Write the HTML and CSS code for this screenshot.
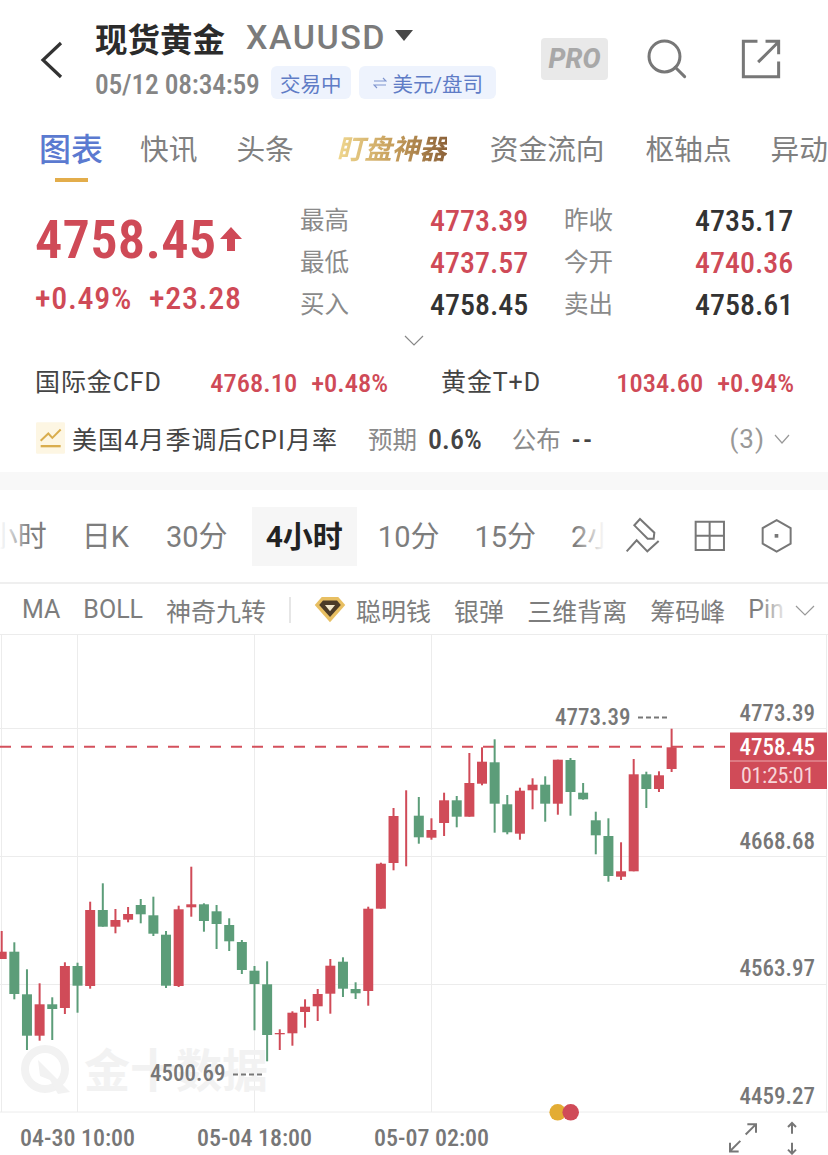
FILE: index.html
```html
<!DOCTYPE html>
<html>
<head>
  <title>现货黄金 XAUUSD</title>
  <link rel="stylesheet" href="styles.css">
</head>
<body>
  <header class="topbar">
    <svg class="back-icon" viewBox="0 0 24 38"><path d="M21 2 L3 19 L21 36"/></svg>
    <div class="title-block">
      <div class="title-row">
        <span class="title-name">现货黄金</span>
        <span class="title-code">XAUUSD</span>
        <span class="title-caret"></span>
      </div>
      <div class="meta-row">
        <span class="meta-time num">05/12 08:34:59</span>
        <span class="pill">交易中</span>
        <span class="pill pill-unit">
          <svg class="swap-icon" viewBox="0 0 14 12"><path d="M1 4 H13 L10 1 M13 8 H1 L4 11"/></svg>
          美元/盘司
        </span>
      </div>
    </div>
    <div class="actions">
      <span class="pro-badge">PRO</span>
      <svg class="search-icon" viewBox="350 35 125 125"><circle cx="405" cy="90" r="46"/><path d="M437 122 L465 150"/></svg>
      <svg class="share-icon" viewBox="630 40 125 125"><path d="M682 50 H640 V155 H745 V110"/><path d="M684 112 L742 54 M706 50 H745 V88"/></svg>
    </div>
  </header>

  <nav class="tabs">
    <span class="tab tab-active">图表</span>
    <span class="tab">快讯</span>
    <span class="tab">头条</span>
    <span class="tab tab-gold">盯盘神器</span>
    <span class="tab tab-funds">资金流向</span>
    <span class="tab">枢轴点</span>
    <span class="tab">异动</span>
  </nav>

  <section class="quote">
    <div class="quote-main">
      <div class="price-row">
        <span class="price num">4758.45</span>
        <svg class="price-arrow" viewBox="0 0 22 24"><path d="M11 0 L22 12 H15 V24 H7 V12 H0 Z"/></svg>
      </div>
      <div class="change-row num">
        <span>+0.49%</span>
        <span>+23.28</span>
      </div>
    </div>
    <div class="quote-grid">
      <span class="q-label">最高</span><span class="q-value num red">4773.39</span>
      <span class="q-label">昨收</span><span class="q-value num">4735.17</span>
      <span class="q-label">最低</span><span class="q-value num red">4737.57</span>
      <span class="q-label">今开</span><span class="q-value num red">4740.36</span>
      <span class="q-label">买入</span><span class="q-value num">4758.45</span>
      <span class="q-label">卖出</span><span class="q-value num">4758.61</span>
    </div>
  </section>

  <div class="expand-row">
    <svg class="expand-chevron" viewBox="0 0 20 11"><path d="M1 1 L10 10 L19 1"/></svg>
  </div>

  <section class="markets">
    <div class="market">
      <span class="market-name">国际金CFD</span>
      <span class="market-value num">4768.10</span>
      <span class="market-change num">+0.48%</span>
    </div>
    <div class="market">
      <span class="market-name">黄金T+D</span>
      <span class="market-value num">1034.60</span>
      <span class="market-change num">+0.94%</span>
    </div>
  </section>

  <section class="event">
    <svg class="event-icon" viewBox="48 20 87 95">
      <rect x="48" y="20" width="87" height="95" rx="4"/>
      <path class="event-line" d="M62 76 L85 54 L97 67 L122 42"/>
      <path class="event-bar" d="M62 92 H122"/>
    </svg>
    <span class="event-title">美国4月季调后CPI月率</span>
    <span class="event-label">预期</span>
    <span class="event-value num">0.6%</span>
    <span class="event-label">公布</span>
    <span class="event-value event-dash num">--</span>
    <span class="event-count">(3)</span>
    <svg class="event-chevron" viewBox="0 0 16 10"><path d="M1 1 L8 9 L15 1"/></svg>
  </section>

  <div class="band"></div>

  <section class="toolbar">
    <div class="periods">
      <span class="period period-first">1小时</span>
      <span class="period">日K</span>
      <span class="period period-thirty">30分</span>
      <span class="period period-active">4小时</span>
      <span class="period">10分</span>
      <span class="period">15分</span>
      <span class="period">2小时</span>
    </div>
    <svg class="tool-icon tool-pin" viewBox="45 35 105 108">
      <path d="M90 41 L133 82 L131 100 L113 100 L73 60 Z"/>
      <path d="M50 138 L80 105 L112 138 L146 107"/>
    </svg>
    <svg class="tool-icon tool-grid" viewBox="250 42 100 100">
      <path d="M258 50 H343 V135 H258 Z M300 50 V135 M258 92 H343"/>
    </svg>
    <svg class="tool-icon tool-hex" viewBox="453 40 100 107">
      <path d="M503 46 L545 70 V117 L503 141 L461 117 V70 Z"/>
      <rect class="tool-dot" x="497" y="88" width="11" height="11"/>
    </svg>
  </section>

  <section class="indicators">
    <span class="indicator">MA</span>
    <span class="indicator">BOLL</span>
    <span class="indicator">神奇九转</span>
    <span class="indicator-sep"></span>
    <svg class="gem-icon" viewBox="100 44 100 85">
      <path class="gem-outer" d="M124 47 H176 L198 72 L150 127 L102 72 Z"/>
      <path class="gem-inner" d="M128 58 H172 L184 72 L150 110 L116 72 Z"/>
      <path class="gem-light" d="M134 72 H166 L150 92 Z"/>
    </svg>
    <span class="indicator indicator-gem">聪明钱</span>
    <span class="indicator">银弹</span>
    <span class="indicator">三维背离</span>
    <span class="indicator">筹码峰</span>
    <span class="indicator">Pin Bar</span>
    <svg class="indicator-chevron" viewBox="0 0 20 11"><path d="M1 1 L10 10 L19 1"/></svg>
  </section>

  <section class="chart">
    <svg class="chart-svg" viewBox="0 634 828 478">
      <path class="grid-line" d="M0 634.5 H828 M1.5 634 V1112 M826.5 634 V1112 M0 728.5 H826 M0 856.5 H826 M0 984.5 H826 M0 1112 H828 M77.5 634 V1112 M254.5 634 V1112 M431.5 634 V1112"/>

      <g class="watermark">
        <circle class="watermark-ring" cx="45" cy="1069" r="20"/>
        <path class="watermark-wedge" d="M38 1060 L70 1092 L58 1094 L50 1080 L40 1076 Z"/>
        <text class="watermark-text" x="84" y="1087">金十数据</text>
      </g>

      <path class="price-line" d="M0 746.7 H730"/>
      <g id="candles"></g>

      <text class="chart-label" x="555" y="725">4773.39</text>
      <path class="mark-dash" d="M638 717.5 H668"/>
      <text class="chart-label" x="150" y="1081">4500.69</text>
      <path class="mark-dash" d="M233 1074.5 H264"/>

      <text class="axis-label" x="815" y="721">4773.39</text>
      <text class="axis-label" x="815" y="849">4668.68</text>
      <text class="axis-label" x="815" y="976">4563.97</text>
      <text class="axis-label" x="815" y="1104">4459.27</text>

      <rect class="price-tag" x="730" y="732.5" width="97" height="56.5"/>
      <path class="price-tag-line" d="M730 761 H827"/>
      <text class="tag-price" x="815" y="755">4758.45</text>
      <text class="tag-time" x="814" y="783">01:25:01</text>

      <circle class="dot-gold" cx="557.7" cy="1112.3" r="8.3"/>
      <circle class="dot-red" cx="570.7" cy="1112.3" r="8.3"/>
    </svg>
  </section>

  <footer class="time-axis">
    <span class="time-label num">04-30 10:00</span>
    <span class="time-label num">05-04 18:00</span>
    <span class="time-label num">05-07 02:00</span>
    <svg class="expand-icon" viewBox="980 512 90 95">
      <path d="M1033 549 L1062 520 M1038 518 H1064 V544 M1017 568 L988 597 M986 574 V600 H1012"/>
    </svg>
    <svg class="scale-icon" viewBox="1160 510 36 102">
      <path d="M1178 548 V516 M1166 528 L1178 516 L1190 528 M1178 575 V608 M1166 596 L1178 608 L1190 596"/>
    </svg>
  </footer>

  <script src="chart.js"></script>
</body>
</html>
```

FILE: styles.css
```css
* {
  box-sizing: border-box;
}

body {
  margin: 0;
  width: 828px;
  height: 1155px;
  overflow: hidden;
  background: #fff;
  color: #333;
  font-family: Roboto, "Noto Sans CJK SC", sans-serif;
}

svg {
  display: block;
  flex: none;
  fill: none;
}

.num {
  font-stretch: 85%;
}

.red {
  color: #cf4a57;
}

/* top bar */
.topbar {
  display: flex;
  height: 120px;
  padding-left: 40px;
}

.back-icon {
  width: 24px;
  height: 38px;
  margin-top: 41px;
  stroke: #333;
  stroke-width: 3.2;
}

.title-block {
  margin-left: 31px;
  padding-top: 15px;
}

.title-row {
  display: flex;
  align-items: center;
  height: 44px;
}

.title-name {
  font-size: 32.5px;
  font-weight: 700;
  color: #2b2b2b;
}

.title-code {
  margin-left: 21px;
  font-size: 34px;
  font-weight: 500;
  letter-spacing: 1.5px;
  color: #7b7b7b;
}

.title-caret {
  margin-left: 9px;
  margin-top: -3px;
  border-left: 9px solid transparent;
  border-right: 9px solid transparent;
  border-top: 11px solid #484848;
}

.meta-row {
  display: flex;
  align-items: center;
  height: 33px;
  margin-top: 7px;
}

.meta-time {
  width: 176px;
  padding-top: 3px;
  font-size: 27.5px;
  font-weight: 500;
  letter-spacing: -0.2px;
  color: #858585;
}

.pill {
  display: flex;
  align-items: center;
  height: 33px;
  padding: 0 9px;
  margin-right: 8px;
  border-radius: 6px;
  background: #eef3fd;
  color: #5f7cc6;
  font-size: 20.5px;
}

.pill-unit {
  padding: 0 13px 0 14px;
}

.swap-icon {
  width: 14px;
  height: 12px;
  margin-right: 6px;
  stroke: #7f95cf;
  stroke-width: 1.2;
}

.actions {
  display: flex;
  margin-left: auto;
  padding-right: 46px;
  padding-top: 38px;
}

.pro-badge {
  width: 67px;
  height: 42px;
  border-radius: 4px;
  background: #e9e9e9;
  color: #a8a8a8;
  font-size: 27px;
  font-weight: 800;
  font-style: italic;
  line-height: 42px;
  text-align: center;
}

.search-icon {
  width: 42px;
  height: 42px;
  margin-left: 38px;
  stroke: #777;
  stroke-width: 9;
  stroke-linecap: round;
}

.share-icon {
  width: 42px;
  height: 42px;
  margin-left: 52px;
  stroke: #777;
  stroke-width: 9;
}

/* tabs */
.tabs {
  display: flex;
  align-items: center;
  gap: 39px;
  height: 66px;
  padding: 0 0 12px 39px;
  overflow: hidden;
  white-space: nowrap;
}

.tab {
  position: relative;
  flex: none;
  font-size: 28.7px;
  color: #808080;
}

.tab-active {
  margin-right: -2px;
  font-size: 32px;
  font-weight: 500;
  color: #5b7ad0;
}

.tab-active::after {
  content: "";
  position: absolute;
  left: 16px;
  bottom: -12px;
  width: 33px;
  height: 4px;
  background: #e3ad4b;
}

.tab-gold {
  margin: 0 4px 0 4px;
  font-size: 27.5px;
  font-weight: 700;
  font-style: italic;
  background: linear-gradient(90deg, #f0d890, #c79f5c 50%, #8c6239);
  -webkit-background-clip: text;
  background-clip: text;
  color: transparent;
}

.tab-funds {
  margin-right: 2px;
}

/* quote block */
.quote {
  display: flex;
  height: 139px;
  padding: 13px 0 0 35px;
}

.quote-main {
  width: 265px;
  padding-top: 10px;
}

.price-row {
  display: flex;
  align-items: center;
  height: 60px;
}

.price {
  font-size: 54.5px;
  font-weight: 600;
  color: #cf4a57;
  letter-spacing: 0.2px;
}

.price-arrow {
  width: 22px;
  height: 24px;
  margin-left: 4px;
  fill: #cf4a57;
}

.change-row {
  display: flex;
  gap: 17px;
  margin-top: 14px;
  font-size: 32px;
  font-weight: 500;
  line-height: 30px;
  letter-spacing: 0.7px;
  color: #cf4a57;
}

.quote-grid {
  display: grid;
  grid-template-columns: 94px 98px 95px 98px;
  grid-auto-rows: 42px;
  column-gap: 36px;
  align-items: center;
}

.q-label {
  padding-bottom: 4px;
  font-size: 24.5px;
  color: #8a8a8a;
}

.q-value {
  font-size: 30px;
  font-weight: 500;
  text-align: right;
}

.expand-row {
  display: flex;
  justify-content: center;
  align-items: center;
  height: 30px;
}

.expand-chevron {
  width: 20px;
  height: 11px;
  stroke: #888;
  stroke-width: 1.2;
}

/* related markets */
.markets {
  display: flex;
  gap: 53px;
  align-items: center;
  height: 54px;
  padding-left: 35px;
}

.market {
  display: flex;
  align-items: center;
  width: 353px;
}

.market-name {
  margin-right: auto;
  padding-bottom: 4px;
  font-size: 25px;
  letter-spacing: 0.9px;
  color: #444;
}

.market-value,
.market-change {
  font-size: 26.5px;
  font-weight: 500;
  color: #cf4a57;
}

.market-change {
  margin-left: 14px;
}

/* calendar event */
.event {
  display: flex;
  align-items: center;
  height: 60px;
  padding-left: 36px;
}

.event-icon {
  width: 29px;
  height: 32px;
  margin-top: -3px;
}

.event-icon rect {
  fill: #fdf6e3;
}

.event-line {
  stroke: #d9ad4e;
  stroke-width: 6;
}

.event-bar {
  stroke: #d9ad4e;
  stroke-width: 7;
}

.event-title {
  margin-left: 7px;
  padding-bottom: 2px;
  font-size: 25px;
  letter-spacing: 1.1px;
  color: #444;
}

.event-label {
  margin-left: 30px;
  padding-bottom: 2px;
  font-size: 24.5px;
  color: #8a8a8a;
}

.event-value {
  margin-left: 11px;
  font-size: 28px;
  font-weight: 500;
  color: #444;
}

.event-dash {
  letter-spacing: 3px;
}

.event-count {
  margin-left: auto;
  font-size: 26px;
  letter-spacing: 1px;
  color: #999;
}

.event-chevron {
  width: 16px;
  height: 10px;
  margin: 0 38px 0 9px;
  stroke: #999;
  stroke-width: 1.2;
}

.band {
  height: 18px;
  margin-top: 3px;
  background: #f8f8f8;
}

/* period toolbar */
.toolbar {
  display: flex;
  align-items: center;
  height: 94px;
  border-bottom: 2px solid #efefef;
}

.periods {
  position: relative;
  display: flex;
  flex: none;
  align-items: center;
  gap: 7px;
  width: 605px;
  height: 59px;
  margin-right: 20px;
  overflow: hidden;
}

.periods::before,
.periods::after {
  content: "";
  position: absolute;
  top: 0;
  width: 30px;
  height: 100%;
  background: linear-gradient(90deg, #fff, rgba(255, 255, 255, 0));
}

.periods::before {
  left: 0;
}

.periods::after {
  right: 0;
  background: linear-gradient(90deg, rgba(255, 255, 255, 0), #fff);
}

.period {
  display: flex;
  flex: none;
  align-items: center;
  height: 59px;
  padding: 0 14px 4px;
  font-size: 29px;
  color: #7d7d7d;
  white-space: nowrap;
}

.period-first {
  margin-left: -41.5px;
}

.period-thirty {
  margin-left: 2px;
}

.period-active {
  margin-left: 3px;
  background: #f6f6f6;
  font-size: 30px;
  font-weight: 700;
  color: #222;
}

.tool-icon {
  stroke: #777;
  stroke-width: 6;
}

.tool-pin {
  width: 35px;
  height: 36px;
  margin-top: -2px;
}

.tool-grid {
  width: 33.3px;
  height: 33.3px;
  margin-left: 33px;
}

.tool-hex {
  width: 33.3px;
  height: 35.7px;
  margin-left: 34px;
}

.tool-dot {
  fill: #777;
  stroke: none;
}

/* indicator row */
.indicators {
  position: relative;
  display: flex;
  align-items: center;
  gap: 23px;
  height: 50px;
  padding: 1px 0 0 22px;
  overflow: hidden;
  white-space: nowrap;
}

.indicators::after {
  content: "";
  position: absolute;
  top: 0;
  right: 0;
  width: 70px;
  height: 100%;
  background: linear-gradient(90deg, rgba(255, 255, 255, 0), #fff 45%);
}

.indicator {
  flex: none;
  font-size: 25px;
  color: #7d7d7d;
}

.indicator-sep {
  flex: none;
  width: 2px;
  height: 26px;
  background: #e6e6e6;
}

.gem-icon {
  width: 32px;
  height: 27px;
}

.gem-outer {
  fill: #e8bf62;
}

.gem-inner {
  fill: #4b3b28;
}

.gem-light {
  fill: #f3e8cd;
}

.indicator-gem {
  margin-left: -13px;
}

.indicator-chevron {
  position: absolute;
  right: 13px;
  top: 21px;
  z-index: 1;
  width: 20px;
  height: 11px;
  stroke: #999;
  stroke-width: 1.2;
}

/* chart */
.chart {
  position: relative;
  height: 478px;
}

.chart-svg {
  width: 828px;
  height: 478px;
  overflow: visible;
}

.grid-line {
  stroke: #ececec;
  stroke-width: 1;
}

.watermark-ring {
  fill: none;
  stroke: #f2f2f2;
  stroke-width: 8;
}

.watermark-wedge {
  fill: #f2f2f2;
}

.watermark-text {
  fill: #f2f2f2;
  font-size: 46px;
  font-weight: 700;
}

.price-line {
  stroke: #d4505c;
  stroke-width: 2;
  stroke-dasharray: 11 10;
}

.candle-red {
  fill: #d04b58;
}

.candle-green {
  fill: #5c9d79;
}

.chart-label,
.axis-label,
.tag-price,
.tag-time {
  font-size: 23px;
  font-stretch: 85%;
  font-weight: 500;
  fill: #777;
}

.axis-label,
.tag-price,
.tag-time {
  text-anchor: end;
}

.mark-dash {
  stroke: #777;
  stroke-width: 2;
  stroke-dasharray: 5 3;
}

.price-tag {
  fill: #d04b58;
}

.price-tag-line {
  stroke: #eba9ae;
  stroke-width: 1;
}

.tag-price {
  fill: #fff;
}

.tag-time {
  font-size: 22px;
  letter-spacing: -0.3px;
  fill: #f7d5d8;
  font-weight: 400;
}

.dot-gold {
  fill: #e3ac34;
}

.dot-red {
  fill: #d04b58;
}

/* time axis */
.time-axis {
  display: flex;
  align-items: center;
  height: 43px;
  padding: 8px 30px 0 20px;
}

.time-label {
  width: 177px;
  font-size: 24px;
  font-weight: 500;
  color: #777;
}

.expand-icon {
  width: 30px;
  height: 32px;
  margin-left: 177px;
  stroke: #777;
  stroke-width: 6;
}

.scale-icon {
  width: 12px;
  height: 34px;
  margin-left: 28px;
  stroke: #777;
  stroke-width: 6;
}
```

FILE: chart.js
```js
// each candle: wick top, wick bottom, body top, body bottom, colour
const candles = [
  [931, 959, 951.7, 959, 'r'], [942.3, 999.3, 951.7, 994, 'g'], [969.3, 1050, 994.3, 1035.7, 'g'],
  [983.3, 1040.7, 1004.3, 1035.7, 'r'], [997.3, 1040, 1004.3, 1009, 'g'], [962.3, 1014, 966, 1008, 'r'],
  [962.7, 1012.7, 966, 985.7, 'g'], [901.7, 988.7, 910, 986, 'r'], [883.3, 926.7, 910, 926.7, 'g'],
  [909, 933.3, 920, 926.7, 'r'], [907, 922.3, 914, 919.7, 'r'], [899, 923.3, 905, 914.3, 'g'],
  [896.7, 936, 915.3, 933.7, 'g'], [931, 988, 934.7, 985.7, 'g'], [905.7, 987, 909.3, 986, 'r'],
  [866.7, 916.7, 904.3, 907.3, 'r'], [903.3, 931.7, 904.3, 921, 'g'], [905, 949, 911.3, 924, 'g'],
  [918.3, 951, 925, 941.3, 'g'], [940, 974, 942, 970, 'g'], [966, 1030.3, 970.7, 984, 'g'],
  [961.3, 1061.3, 984.3, 1035, 'g'], [1029.3, 1050, 1033, 1034.3, 'r'], [1011.3, 1045.7, 1012.7, 1033.3, 'r'],
  [999.3, 1027.7, 1006.7, 1012, 'r'], [989, 1021, 994, 1006.3, 'r'], [959, 1013.7, 965.7, 993.7, 'r'],
  [957.3, 997, 961.7, 988.7, 'g'], [982.3, 999, 989, 993.3, 'g'], [906.7, 1005.7, 908.7, 991, 'r'],
  [862.7, 908.7, 863.7, 908.7, 'r'], [808, 870.3, 816, 863, 'r'], [790.3, 866.3, 828, 828, 'r'],
  [797, 843.7, 815.7, 837.3, 'g'], [818.3, 839.7, 830, 837.7, 'r'], [792.7, 836, 800.3, 823, 'r'],
  [796, 827.3, 800.3, 816.7, 'g'], [753, 816.7, 783, 816.7, 'r'], [747.3, 785.3, 761.7, 783.7, 'r'],
  [739.3, 832.7, 762.3, 803.7, 'g'], [795, 834.3, 804.3, 832.3, 'g'], [787.7, 839.7, 790.7, 833.7, 'r'],
  [778.3, 809.3, 784.7, 790.3, 'r'], [776.3, 821.7, 784.7, 803.7, 'g'], [759.7, 814.7, 759.7, 803.7, 'r'],
  [758, 815.7, 760, 792, 'g'], [783, 799.7, 792.7, 799.3, 'g'], [811.7, 854.3, 820.3, 835.3, 'g'],
  [818.3, 881.7, 836, 876, 'g'], [842.3, 880, 871.3, 876.7, 'r'], [759, 871.3, 774.3, 871.3, 'r'],
  [771.7, 808, 774.3, 789, 'g'], [771.3, 792, 775.3, 789, 'r'], [728.7, 772, 747.3, 769, 'r']
];

const group = document.getElementById('candles');
const step = 12.64;
const bodyWidth = 10;
const wickWidth = 2;

function addRect(x, y, width, height, className) {
  const rect = document.createElementNS('http://www.w3.org/2000/svg', 'rect');
  rect.setAttribute('x', x);
  rect.setAttribute('y', y);
  rect.setAttribute('width', width);
  rect.setAttribute('height', height);
  rect.setAttribute('class', className);
  group.appendChild(rect);
}

candles.forEach((c, i) => {
  const x = 1.69 + i * step;
  const className = c[4] === 'r' ? 'candle-red' : 'candle-green';
  addRect(x - wickWidth / 2, c[0], wickWidth, c[1] - c[0], className);
  if (c[3] > c[2]) {
    addRect(x - bodyWidth / 2, c[2], bodyWidth, c[3] - c[2], className);
  }
});
```
